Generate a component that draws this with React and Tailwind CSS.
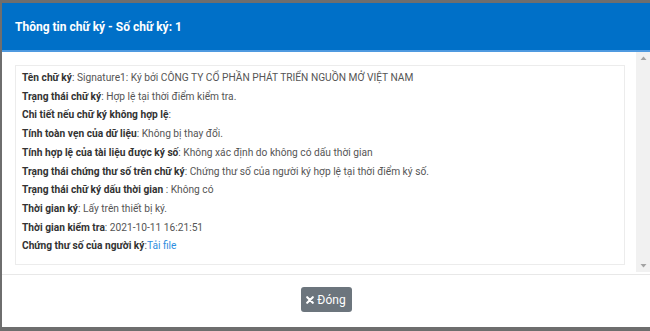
import React from 'react';

const rows = [
  { label: 'Tên chữ ký', value: 'Signature1: Ký bởi CÔNG TY CỔ PHẦN PHÁT TRIỂN NGUỒN MỞ VIỆT NAM' },
  { label: 'Trạng thái chữ ký', value: 'Hợp lệ tại thời điểm kiểm tra.' },
  { label: 'Chi tiết nếu chữ ký không hợp lệ', value: '' },
  { label: 'Tính toàn vẹn của dữ liệu', value: 'Không bị thay đổi.' },
  { label: 'Tính hợp lệ của tài liệu được ký số', value: 'Không xác định do không có dấu thời gian' },
  { label: 'Trạng thái chứng thư số trên chữ ký', value: 'Chứng thư số của người ký hợp lệ tại thời điểm ký số.' },
  { label: 'Trạng thái chữ ký dấu thời gian ', value: 'Không có' },
  { label: 'Thời gian ký', value: 'Lấy trên thiết bị ký.' },
  { label: 'Thời gian kiểm tra', value: '2021-10-11 16:21:51' },
];

const App = () => {
  return (
    <div
      className="w-[650px] h-[331px] overflow-hidden bg-[#6e6e6e] pt-[3px] pl-[2px]"
      style={{ fontFamily: 'Roboto, "Noto Sans", sans-serif' }}
    >
      <div className="w-[660px] h-[324px] bg-white flex flex-col">
        {/* Header */}
        <div className="h-[49px] shrink-0 bg-[#0070c8] border-b-2 border-[#4f9ae0] flex items-center px-[13px]">
          <h4 className="text-white font-bold text-[12px]">
            Thông tin chữ ký - Số chữ ký: 1
          </h4>
        </div>

        {/* Body with scrollbar */}
        <div className="h-[220px] shrink-0 flex">
          <div className="w-[634px] pt-[13px] pl-[13px] pr-[11px]">
            <div className="border border-[#ececec] pt-[3px] pb-[8px] px-[6px] text-[10.2px] leading-[18.7px] text-[#555]">
              {rows.map((r) => (
                <div key={r.label}>
                  <span className="font-bold text-[#333]">{r.label}</span>: {r.value}
                </div>
              ))}
              <div>
                <span className="font-bold text-[#333]">Chứng thư số của người ký</span>:
                <span className="text-[#2f8ee0]">Tải file</span>
              </div>
            </div>
          </div>
          <div className="w-[14px] bg-[#f1f1f1] flex flex-col justify-between items-center py-[4px]">
            <svg width="7" height="5" viewBox="0 0 7 5">
              <path d="M3.5 0.5 L6.5 4 L0.5 4 Z" fill="#a3a3a3" />
            </svg>
            <svg width="7" height="5" viewBox="0 0 7 5">
              <path d="M0.5 1 L6.5 1 L3.5 4.5 Z" fill="#a3a3a3" />
            </svg>
          </div>
        </div>

        {/* Footer */}
        <div className="mt-[2px] border-t border-[#e8e8e8] flex-1 flex justify-center items-start pt-[12px] pr-[12px]">
          <button className="h-[25px] w-[51px] rounded-[3px] bg-[#6c757d] text-white text-[12px] flex items-center justify-center gap-[3px]">
            <svg width="8" height="8" viewBox="0 0 10 10">
              <path d="M1.5 1.5 L8.5 8.5 M8.5 1.5 L1.5 8.5" stroke="white" strokeWidth="2.6" strokeLinecap="round" />
            </svg>
            Đóng
          </button>
        </div>
      </div>
    </div>
  );
};

export default App;
